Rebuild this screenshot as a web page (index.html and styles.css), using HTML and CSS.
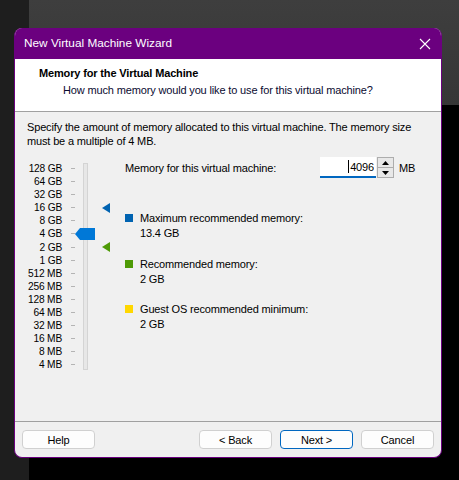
FILE: index.html
```html
<!DOCTYPE html>
<html lang="en">
<head>
    <meta charset="UTF-8">
    <meta name="viewport" content="width=device-width, initial-scale=1.0">
    <title>New Virtual Machine Wizard</title>
    <link rel="stylesheet" href="styles.css">
</head>
<body>

    <div class="desktop">
        <div class="strip"></div>
        <div class="backdrop">
            <div class="backdrop-top"></div>
        </div>
    </div>

    <div class="wizard">
        <div class="titlebar">
            <span class="title">New Virtual Machine Wizard</span>
            <svg class="close" width="12" height="12" viewBox="0 0 12 12">
                <path d="M1 1 L11 11 M11 1 L1 11" stroke="#fff" stroke-width="1.1"/>
            </svg>
        </div>

        <div class="header">
            <h1>Memory for the Virtual Machine</h1>
            <p>How much memory would you like to use for this virtual machine?</p>
        </div>

        <div class="content">
            <p class="intro">Specify the amount of memory allocated to this virtual machine. The memory size must be a multiple of 4 MB.</p>

            <div class="memory">
                <div class="scale">
                    <ul class="labels">
                        <li>128 GB</li>
                        <li>64 GB</li>
                        <li>32 GB</li>
                        <li>16 GB</li>
                        <li>8 GB</li>
                        <li>4 GB</li>
                        <li>2 GB</li>
                        <li>1 GB</li>
                        <li>512 MB</li>
                        <li>256 MB</li>
                        <li>128 MB</li>
                        <li>64 MB</li>
                        <li>32 MB</li>
                        <li>16 MB</li>
                        <li>8 MB</li>
                        <li>4 MB</li>
                    </ul>
                    <div class="track"></div>
                    <!-- thumb sits on 4 GB, markers on 16 GB / 2 GB -->
                    <svg class="thumb" width="20" height="12" viewBox="0 0 20 12">
                        <path d="M0 6 L5 0 H20 V12 H5 Z" fill="#0078d7"/>
                    </svg>
                    <svg class="marker max" width="8" height="10" viewBox="0 0 8 10">
                        <path d="M0 5 L8 0 V10 Z" fill="#0063b1"/>
                    </svg>
                    <svg class="marker rec" width="8" height="10" viewBox="0 0 8 10">
                        <path d="M0 5 L8 0 V10 Z" fill="#4e9a06"/>
                    </svg>
                </div>

                <div class="details">
                    <div class="amount">
                        <label for="mem">Memory for this virtual machine:</label>
                        <div class="field">
                            <span class="caret"></span>
                            <input type="text" id="mem" value="4096">
                        </div>
                        <div class="spin">
                            <button class="up"><svg width="7" height="4" viewBox="0 0 7 4"><path d="M0 4 L3.5 0 L7 4 Z" fill="#000"/></svg></button>
                            <button class="down"><svg width="7" height="4" viewBox="0 0 7 4"><path d="M0 0 L3.5 4 L7 0 Z" fill="#000"/></svg></button>
                        </div>
                        <span class="unit">MB</span>
                    </div>

                    <div class="legend">
                        <div class="item">
                            <span class="swatch blue"></span>
                            <div>
                                <div>Maximum recommended memory:</div>
                                <div>13.4 GB</div>
                            </div>
                        </div>
                        <div class="item">
                            <span class="swatch green"></span>
                            <div>
                                <div>Recommended memory:</div>
                                <div>2 GB</div>
                            </div>
                        </div>
                        <div class="item">
                            <span class="swatch yellow"></span>
                            <div>
                                <div>Guest OS recommended minimum:</div>
                                <div>2 GB</div>
                            </div>
                        </div>
                    </div>
                </div>
            </div>
        </div>

        <div class="footer">
            <button class="btn">Help</button>
            <div class="nav">
                <button class="btn">&lt; Back</button>
                <button class="btn default">Next &gt;</button>
                <button class="btn">Cancel</button>
            </div>
        </div>
    </div>

</body>
</html>
```

FILE: styles.css
```css
body {
    margin: 0;
    width: 459px;
    height: 480px;
    overflow: hidden;
    font-family: "Liberation Sans", Arial, sans-serif;
    font-size: 11px;
    letter-spacing: -0.15px;
    color: #000;
    position: relative;
}

/* desktop behind the dialog */
.desktop {
    display: flex;
    height: 480px;
}

.strip {
    width: 29px;
    background-color: #1e1e1e;
}

.backdrop {
    flex: 1;
    background-color: #000;
}

.backdrop-top {
    height: 105px;
    background: linear-gradient(#3e3e3e, #363636);
}

/* dialog window */
.wizard {
    position: absolute;
    left: 14px;
    top: 28px;
    width: 428px;
    height: 430px;
    box-sizing: border-box;
    border: 1px solid #6b007f;
    border-top: none;
    border-radius: 8px;
    background-color: #f0f0f0;
    display: flex;
    flex-direction: column;
    overflow: hidden;
}

.titlebar {
    height: 31px;
    flex-shrink: 0;
    background-color: #6b007f;
    color: #fff;
    display: flex;
    align-items: center;
    justify-content: space-between;
    padding: 0 10px 0 9px;
    font-size: 11.8px;
    letter-spacing: 0;
}

.title {
    margin-top: -1px;
}

.header {
    flex-shrink: 0;
    background-color: #fff;
    border-bottom: 1px solid #a0a0a0;
    box-sizing: border-box;
    height: 53px;
    padding-top: 7px;
}

.header h1 {
    margin: 0 0 3px 24px;
    font-size: 11px;
    font-weight: bold;
    line-height: 14px;
}

.header p {
    margin: 0 0 0 48px;
    line-height: 14px;
    color: #0a0a30;
}

.content {
    flex: 1;
    padding: 8px 12px 0 12px;
    border-bottom: 1px solid #a0a0a0;
}

.intro {
    margin: 0;
    line-height: 14px;
}

.memory {
    display: flex;
    margin-top: 14px;
}

/* slider column */
.scale {
    position: relative;
    width: 98px;
    flex-shrink: 0;
}

.labels {
    list-style: none;
    margin: 0;
    padding: 0;
    width: 48px;
}

.labels li {
    height: 13.1px;
    line-height: 13px;
    display: flex;
    justify-content: flex-end;
    white-space: nowrap;
    padding-right: 13px;
    position: relative;
    font-size: 10.2px;
    letter-spacing: -0.2px;
}

.labels li::after {
    content: "";
    position: absolute;
    right: 0;
    top: 6px;
    width: 4px;
    height: 1px;
    background-color: #b4b4b4;
}

.track {
    position: absolute;
    left: 56px;
    top: 1px;
    width: 3px;
    height: 205px;
    background-color: #e7e7e7;
    border: 1px solid #d4d4d4;
}

.thumb {
    position: absolute;
    left: 48px;
    top: 66px;
}

.marker {
    position: absolute;
    left: 75px;
}

.marker.max {
    top: 41px;
}

.marker.rec {
    top: 80px;
}

/* right column */
.details {
    flex: 1;
}

.amount {
    display: flex;
    align-items: center;
    margin-top: -5px;
    height: 21px;
}

.amount label {
    width: 195px;
}

.field {
    position: relative;
    width: 56px;
    height: 21px;
    box-sizing: border-box;
    background-color: #fff;
    border-bottom: 2px solid #0067c0;
}

.field input {
    width: 100%;
    height: 19px;
    box-sizing: border-box;
    border: none;
    padding: 0 2px 0 0;
    text-align: right;
    font-family: inherit;
    font-size: 11px;
    letter-spacing: -0.15px;
    background: transparent;
    outline: none;
}

.caret {
    position: absolute;
    left: 28px;
    top: 3px;
    width: 1px;
    height: 13px;
    background-color: #000;
}

.spin {
    display: flex;
    flex-direction: column;
    width: 17px;
    height: 21px;
    box-sizing: border-box;
    border: 1px solid #adadad;
    margin-left: 1px;
}

.spin button {
    flex: 1;
    padding: 0;
    margin: 0;
    border: 1px solid #adadad;
    background-color: #e8e8e8;
    display: flex;
    align-items: center;
    justify-content: center;
}

.spin .up {
    border-width: 0 0 1px 0;
}

.spin .down {
    border-width: 0;
}

.unit {
    margin-left: 5px;
}

.legend {
    margin-top: 33px;
}

.item {
    display: flex;
    line-height: 15px;
    margin-bottom: 15.5px;
}

.swatch {
    width: 8px;
    height: 8px;
    margin: 3px 7px 0 0;
}

.swatch.blue {
    background-color: #0063b1;
}

.swatch.green {
    background-color: #4e9a06;
}

.swatch.yellow {
    background-color: #ffd700;
}

/* buttons */
.footer {
    height: 35px;
    box-sizing: border-box;
    flex-shrink: 0;
    display: flex;
    justify-content: space-between;
    align-items: flex-start;
    padding: 8px 7px 0 7px;
}

.nav {
    display: flex;
    gap: 8px;
}

.btn {
    width: 73px;
    height: 19px;
    padding: 0;
    background-color: #fdfdfd;
    border: 1px solid #d0d0d0;
    border-radius: 4px;
    font-family: inherit;
    font-size: 11px;
    letter-spacing: -0.15px;
    color: #000;
}

.btn.default {
    border-color: #0067c0;
}
```
